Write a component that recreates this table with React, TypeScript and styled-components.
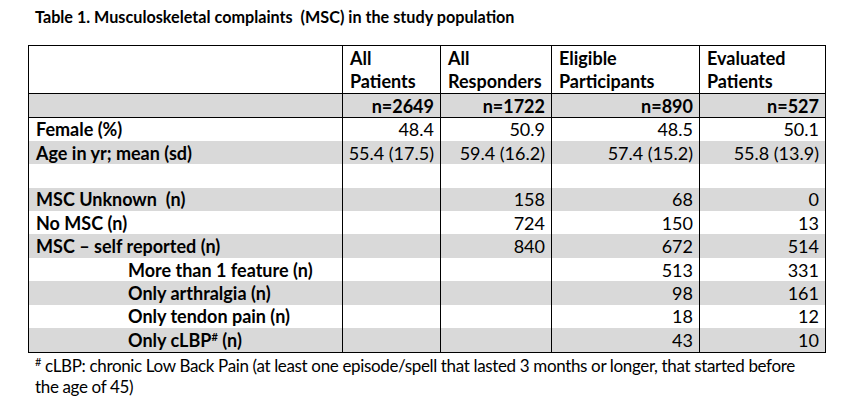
import React from "react";
import styled, { createGlobalStyle } from "styled-components";

const Global = createGlobalStyle`
  html, body { margin: 0; padding: 0; background: #ffffff; }
  body { font-family: Lato, "Open Sans", sans-serif; color: #000; }
`;

const Page = styled.div`
  padding: 6px 0 0 28px;
  width: 846px;
  height: 407px;
  box-sizing: border-box;
`;

const Title = styled.div`
  font-weight: 700;
  font-size: 16.2px;
  line-height: 22px;
  padding-left: 7px;
  white-space: pre;
  margin-bottom: 17px;
`;

const Table = styled.table`
  border-collapse: collapse;
  table-layout: fixed;
  width: 797px;
  font-size: 18px;
`;

const HeadCell = styled.th`
  border: 1px solid #000;
  text-align: left;
  vertical-align: top;
  font-weight: 700;
  padding: 1px 7px 0;
  height: 46px;
  line-height: 23px;
  box-sizing: border-box;
  white-space: nowrap;
`;

const Row = styled.tr<{ $shade?: boolean; $ruled?: boolean }>`
  background: ${(p) => (p.$shade ? "#d9d9d9" : "transparent")};
  height: ${(p) => (p.$ruled ? "24px" : "23.4px")};
  ${(p) => (p.$ruled ? "border-bottom: 1px solid #000;" : "")}
`;

const Label = styled.td<{ $indent?: boolean }>`
  font-weight: 700;
  padding: 0 0 0 ${(p) => (p.$indent ? "99px" : "7px")};
  border-left: 1px solid #000;
  border-right: 1px solid #000;
  line-height: 22px;
  white-space: pre;
`;

const Num = styled.td<{ $bold?: boolean }>`
  text-align: right;
  font-weight: ${(p) => (p.$bold ? 700 : 400)};
  padding: 0 6px 0 0;
  border-left: 1px solid #000;
  border-right: 1px solid #000;
  line-height: 22px;
  white-space: nowrap;
`;

const Sup = styled.span`
  font-size: 11px;
  line-height: 0;
  position: relative;
  top: -6px;
`;

const Footnote = styled.div`
  font-size: 17px;
  letter-spacing: -0.35px;
  line-height: 21px;
  padding: 2px 0 0 7px;
  white-space: nowrap;
`;

type R = {
  label: React.ReactNode;
  vals: string[];
  shade?: boolean;
  indent?: boolean;
};

const rows: R[] = [
  { label: "Female (%)", vals: ["48.4", "50.9", "48.5", "50.1"] },
  { label: "Age in yr; mean (sd)", vals: ["55.4 (17.5)", "59.4 (16.2)", "57.4 (15.2)", "55.8 (13.9)"], shade: true },
  { label: "\u00a0", vals: ["", "", "", ""] },
  { label: "MSC Unknown  (n)", vals: ["", "158", "68", "0"], shade: true },
  { label: "No MSC (n)", vals: ["", "724", "150", "13"] },
  { label: "MSC \u2013 self reported (n)", vals: ["", "840", "672", "514"], shade: true },
  { label: "More than 1 feature (n)", vals: ["", "", "513", "331"], indent: true },
  { label: "Only arthralgia (n)", vals: ["", "", "98", "161"], shade: true, indent: true },
  { label: "Only tendon pain (n)", vals: ["", "", "18", "12"], indent: true },
  { label: <>Only cLBP<Sup>#</Sup> (n)</>, vals: ["", "", "43", "10"], shade: true, indent: true },
];

export default function App() {
  return (
    <>
      <Global />
      <Page>
        <Title>Table 1. Musculoskeletal complaints  (MSC) in the study population</Title>
        <Table>
          <colgroup>
            <col style={{ width: 314 }} />
            <col style={{ width: 98 }} />
            <col style={{ width: 111 }} />
            <col style={{ width: 148 }} />
            <col style={{ width: 126 }} />
          </colgroup>
          <thead>
            <tr>
              <HeadCell></HeadCell>
              <HeadCell>All<br />Patients</HeadCell>
              <HeadCell>All<br />Responders</HeadCell>
              <HeadCell>Eligible<br />Participants</HeadCell>
              <HeadCell>Evaluated<br />Patients</HeadCell>
            </tr>
          </thead>
          <tbody>
            <Row $shade $ruled>
              <Label></Label>
              <Num $bold>n=2649</Num>
              <Num $bold>n=1722</Num>
              <Num $bold>n=890</Num>
              <Num $bold>n=527</Num>
            </Row>
            {rows.map((r, i) => (
              <Row key={i} $shade={r.shade} $ruled={i === rows.length - 1}>
                <Label $indent={r.indent}>{r.label}</Label>
                {r.vals.map((v, j) => (
                  <Num key={j}>{v}</Num>
                ))}
              </Row>
            ))}
          </tbody>
        </Table>
        <Footnote>
          <Sup>#</Sup> cLBP: chronic Low Back Pain (at least one episode/spell that lasted 3 months or longer, that started before
          <br />
          the age of 45)
        </Footnote>
      </Page>
    </>
  );
}
